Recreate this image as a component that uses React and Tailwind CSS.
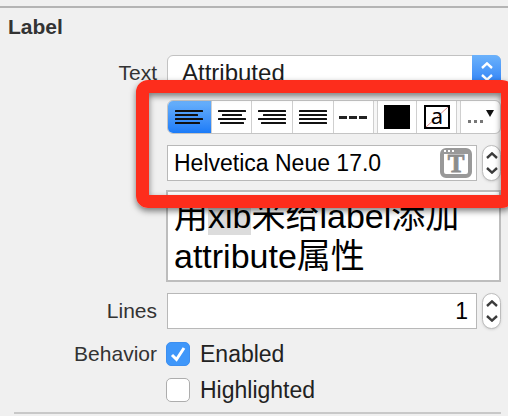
import React, { useState } from 'react';

const ALIGN_LINES = {
  left: [[0, 28], [0, 23], [0, 28], [0, 25]],
  center: [[0, 28], [4, 20], [0, 28], [2, 24]],
  right: [[0, 28], [5, 23], [0, 28], [3, 25]],
  justify: [[0, 28], [0, 28], [0, 28], [0, 28]],
};

const ALIGNMENTS = ['left', 'center', 'right', 'justify'];

function AlignIcon({ type }) {
  return (
    <svg width="28" height="14" viewBox="0 0 28 14" fill="#111" aria-hidden="true">
      {ALIGN_LINES[type].map(([x, w], i) => (
        <rect key={i} x={x} y={i * 4} width={w} height="2" rx="0.5" />
      ))}
    </svg>
  );
}

function Chevron({ down = false }) {
  return (
    <svg width="12" height="7" viewBox="0 0 12 7" fill="none" stroke="currentColor"
      strokeWidth="2.4" aria-hidden="true">
      <path d={down ? 'M1 1 L6 5.6 L11 1' : 'M1 6 L6 1.4 L11 6'} />
    </svg>
  );
}

function Stepper({ label, onUp, onDown }) {
  return (
    <div className="flex h-9 w-[19px] flex-none flex-col overflow-hidden rounded-full border border-[#bdbdbd] bg-white text-[#3c3c3c] shadow-sm">
      <button type="button" aria-label={`Increase ${label}`} onClick={onUp}
        className="flex flex-1 items-end justify-center pb-1">
        <Chevron />
      </button>
      <button type="button" aria-label={`Decrease ${label}`} onClick={onDown}
        className="flex flex-1 items-start justify-center pt-1">
        <Chevron down />
      </button>
    </div>
  );
}

function FontPanelIcon() {
  return (
    <svg width="32" height="30" viewBox="0 0 32 30" aria-hidden="true">
      <rect x="2" y="2" width="28" height="26" rx="4" fill="#fff" stroke="#999" strokeWidth="4" />
      <path d="M1 5.5 Q1 1 5.5 1 H26.5 Q31 1 31 5.5 V6 H1 Z" fill="#999" />
      <rect x="4" y="2" width="2" height="2" fill="#fff" />
      <rect x="8" y="2" width="2" height="2" fill="#fff" />
      <rect x="12" y="2" width="2" height="2" fill="#fff" />
      <text x="16" y="24" textAnchor="middle" fontFamily="Liberation Serif, serif"
        fontWeight="bold" fontSize="25" fill="#8c8c8c" stroke="#8c8c8c" strokeWidth="0.8">T</text>
    </svg>
  );
}

function Checkbox({ id, label, checked, onChange }) {
  return (
    <div className="flex items-center gap-[10px]">
      <span className="relative -ml-px size-6">
        <input id={id} type="checkbox" checked={checked} onChange={onChange}
          className="block size-6 appearance-none rounded-[5px] border border-[#adadad] bg-white checked:border-[#3d8ff0] checked:bg-[#3f97fa]" />
        {checked && (
          <svg viewBox="0 0 24 24" fill="none" stroke="#fff" strokeWidth="3"
            className="pointer-events-none absolute inset-0" aria-hidden="true">
            <path d="M6 13 L10.5 17.5 L18 6" />
          </svg>
        )}
      </span>
      <label htmlFor={id} className="text-[23px] leading-6 text-[#222]">{label}</label>
    </div>
  );
}

const ROW = 'grid grid-cols-[157px_minmax(0,1fr)] items-center gap-x-[10px]';
const LABEL = 'text-right text-[21px] leading-6 text-[#333]';

export default function App() {
  const [align, setAlign] = useState('left');
  const [font, setFont] = useState('Helvetica Neue 17.0');
  const [lines, setLines] = useState(1);
  const [enabled, setEnabled] = useState(true);
  const [highlighted, setHighlighted] = useState(false);

  return (
    <main className="min-h-screen overflow-hidden bg-[#f0f0f0] pt-[6px] font-['Liberation_Sans','Noto_Sans_CJK_SC',sans-serif]">
      <div className="h-[2px] bg-[#b4b4b4]" />
      <h2 className="mt-[7px] pl-2 text-[21px] font-bold leading-6 text-[#333]">Label</h2>

      <div className="mt-4 flex flex-col pr-[7px]">
        {/* Text type */}
        <div className={ROW}>
          <label htmlFor="text-type" className={LABEL}>Text</label>
          <div className="relative">
            <select id="text-type" defaultValue="Attributed"
              className="block h-9 w-full appearance-none rounded-md border border-[#c2c2c2] bg-white pl-[14px] text-[24px] leading-8 text-[#1c1c1c]">
              <option>Plain</option>
              <option>Attributed</option>
            </select>
            <span className="pointer-events-none absolute inset-y-0 right-0 flex w-[29px] flex-col items-center justify-start gap-[5px] rounded-r-md bg-linear-to-b from-[#6cb2fb] to-[#1f76f5] pt-[7px] text-white">
              <Chevron />
              <Chevron down />
            </span>
          </div>
        </div>

        {/* Paragraph style and font */}
        <div className="relative mt-[9px] flex flex-col gap-[11px]">
          <div className={ROW}>
            <span />
            <div className="grid h-[34px] grid-cols-[44fr_41fr_41fr_41fr_40fr_4fr_40fr_40fr_4fr_39fr] divide-x divide-[#cfcfcf] overflow-hidden rounded-md border border-[#c4c4c4] bg-white">
              {ALIGNMENTS.map((type) => (
                <button key={type} type="button" aria-label={`Align ${type}`} aria-pressed={align === type}
                  onClick={() => setAlign(type)}
                  className="flex items-center justify-center aria-pressed:bg-linear-to-b aria-pressed:from-[#69b1fb] aria-pressed:to-[#1a7bf8]">
                  <AlignIcon type={type} />
                </button>
              ))}
              <button type="button" aria-label="Natural alignment" className="flex items-center justify-center gap-[2px]">
                <span className="h-[3px] w-2 bg-[#222]" />
                <span className="h-[3px] w-2 bg-[#222]" />
                <span className="h-[3px] w-2 bg-[#222]" />
              </button>
              <span className="bg-[#f6f6f6]" />
              <button type="button" aria-label="Text color" className="flex items-center justify-center">
                <span className="h-6 w-[26px] bg-black" />
              </button>
              <button type="button" aria-label="Background color" className="flex items-center justify-center">
                <span className="relative flex h-6 w-[26px] items-center justify-center border-2 border-black bg-white font-['Noto_Sans',sans-serif] text-[22px] leading-5 text-black">
                  <svg viewBox="0 0 22 20" className="absolute inset-0" aria-hidden="true">
                    <path d="M0 20 L22 0" stroke="#d88a8a" strokeWidth="1" />
                  </svg>
                  <span className="relative -mt-1">a</span>
                </span>
              </button>
              <span className="bg-[#f6f6f6]" />
              <button type="button" aria-label="More options" className="flex items-center justify-center">
                <svg width="28" height="16" viewBox="0 0 28 16" aria-hidden="true">
                  <g fill="#777">
                    <rect x="1" y="11" width="3" height="3" />
                    <rect x="7" y="11" width="3" height="3" />
                    <rect x="13" y="11" width="3" height="3" />
                  </g>
                  <path d="M19 1 H27 L23 8 Z" fill="#111" />
                </svg>
              </button>
            </div>
          </div>

          <div className={ROW}>
            <span />
            <div className="flex items-center gap-[5px]">
              <div className="flex h-9 min-w-0 flex-1 items-center border border-[#b8b8b8] bg-white pl-[6px] pr-1">
                <input aria-label="Font" value={font} onChange={(e) => setFont(e.target.value)}
                  className="min-w-0 flex-1 bg-transparent text-[23px] leading-8 text-black outline-none" />
                <button type="button" aria-label="Show fonts">
                  <FontPanelIcon />
                </button>
              </div>
              <Stepper label="font size" />
            </div>
          </div>

          {/* Highlight frame around the attribute controls */}
          <div className="pointer-events-none absolute -bottom-[27px] -right-[13px] -top-5 left-[136px] z-10 rounded-xl border-[13px] border-[#fd2d1c] shadow-[0_3px_6px_rgba(0,0,0,0.5),inset_0_3px_6px_rgba(0,0,0,0.5)]" />
        </div>

        {/* Attributed text */}
        <div className={`${ROW} mt-[9px]`}>
          <span />
          <div role="textbox" aria-label="Attributed text" aria-multiline="true" tabIndex={0}
            className="-ml-px h-[92px] border-2 border-[#bdbdbd] bg-white pl-[6px] pt-1 text-[34px] leading-10 text-black">
            用<span className="bg-[#dcdcdc]">xib</span>米给label添加<br />attribute属性
          </div>
        </div>

        {/* Lines */}
        <div className={`${ROW} mt-[11px]`}>
          <label htmlFor="lines" className={LABEL}>Lines</label>
          <div className="flex items-center gap-[5px]">
            <input id="lines" inputMode="numeric" value={lines}
              onChange={(e) => setLines(Number(e.target.value) || 0)}
              className="h-9 min-w-0 flex-1 border border-[#b8b8b8] bg-white pr-2 text-right text-[23px] leading-8 text-black outline-none" />
            <Stepper label="lines" onUp={() => setLines(lines + 1)} onDown={() => setLines(Math.max(0, lines - 1))} />
          </div>
        </div>

        {/* Behavior */}
        <div className={`${ROW} mt-[13px]`} role="group" aria-labelledby="behavior">
          <span id="behavior" className={LABEL}>Behavior</span>
          <Checkbox id="enabled" label="Enabled" checked={enabled}
            onChange={(e) => setEnabled(e.target.checked)} />
          <div className="col-start-2 mt-3">
            <Checkbox id="highlighted" label="Highlighted" checked={highlighted}
              onChange={(e) => setHighlighted(e.target.checked)} />
          </div>
        </div>

        <div className="ml-[14px] mt-[10px] h-[2px] bg-[#c8c8c8]" />
      </div>
    </main>
  );
}
